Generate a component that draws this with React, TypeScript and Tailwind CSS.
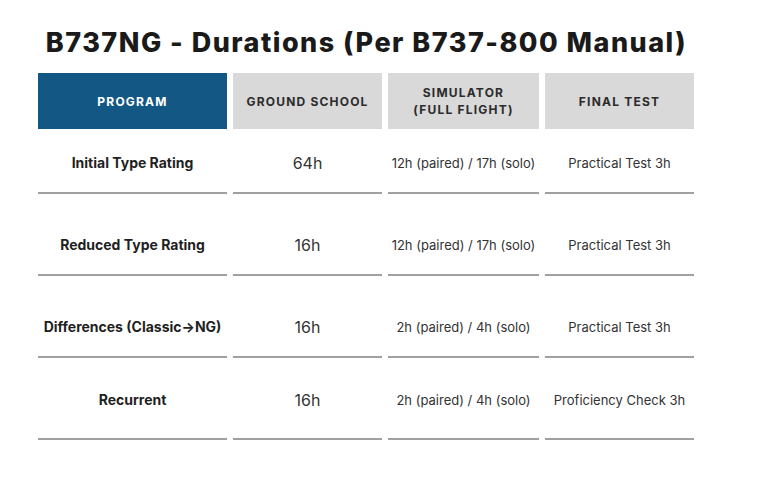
import React from 'react';

type Row = {
  program: string;
  ground: string;
  sim: string;
  test: string;
  height: string;
  pad: string;
};

const rows: Row[] = [
  { program: 'Initial Type Rating', ground: '64h', sim: '12h (paired) / 17h (solo)', test: 'Practical Test 3h', height: 'h-[65px]', pad: 'pt-[24px]' },
  { program: 'Reduced Type Rating', ground: '16h', sim: '12h (paired) / 17h (solo)', test: 'Practical Test 3h', height: 'h-[82px]', pad: 'pt-[41px]' },
  { program: 'Differences (Classic→NG)', ground: '16h', sim: '2h (paired) / 4h (solo)', test: 'Practical Test 3h', height: 'h-[82px]', pad: 'pt-[41px]' },
  { program: 'Recurrent', ground: '16h', sim: '2h (paired) / 4h (solo)', test: 'Proficiency Check 3h', height: 'h-[82px]', pad: 'pt-[32px]' },
];

const HeadCell = ({ children, blue }: { children: React.ReactNode; blue?: boolean }) => (
  <div
    className={`flex h-[56px] items-center justify-center text-center text-[12px] font-bold uppercase leading-[17px] tracking-[0.1em] ${
      blue ? 'bg-[#135785] text-white' : 'bg-[#d9d9d9] text-[#2b2b2b]'
    }`}
  >
    {children}
  </div>
);

// kind: program name / ground hours / other
const BodyCell = ({ children, row, kind }: { children: React.ReactNode; row: Row; kind?: 'bold' | 'big' }) => (
  <div
    className={`flex justify-center border-b-2 border-[#a0a0a0] text-center leading-[20px] ${row.height} ${row.pad} ${
      kind === 'bold'
        ? 'text-[14px] font-bold text-[#1f1f1f]'
        : kind === 'big'
          ? 'text-[16px] text-[#333333]'
          : 'text-[13px] text-[#333333]'
    }`}
  >
    {children}
  </div>
);

export default function App() {
  return (
    <div className="h-[492px] w-[768px] bg-white" style={{ fontFamily: 'Inter, "DejaVu Sans", sans-serif' }}>
      <div className="ml-[38px] w-[657px]">
        <div className="flex h-[73px] items-center justify-center pt-[14px]">
          <h1 className="text-[27px] font-extrabold tracking-[0.055em] text-[#1a1a1a]">
            B737NG - Durations (Per B737-800 Manual)
          </h1>
        </div>
        <div className="grid grid-cols-[189px_149px_151px_149px] gap-x-[6px]">
          <HeadCell blue>Program</HeadCell>
          <HeadCell>Ground School</HeadCell>
          <HeadCell>
            <span>
              Simulator
              <br />
              (Full Flight)
            </span>
          </HeadCell>
          <HeadCell>Final Test</HeadCell>
          {rows.map((r) => (
            <React.Fragment key={r.program}>
              <BodyCell row={r} kind="bold">
                {r.program}
              </BodyCell>
              <BodyCell row={r} kind="big">
                {r.ground}
              </BodyCell>
              <BodyCell row={r}>{r.sim}</BodyCell>
              <BodyCell row={r}>{r.test}</BodyCell>
            </React.Fragment>
          ))}
        </div>
      </div>
    </div>
  );
}
